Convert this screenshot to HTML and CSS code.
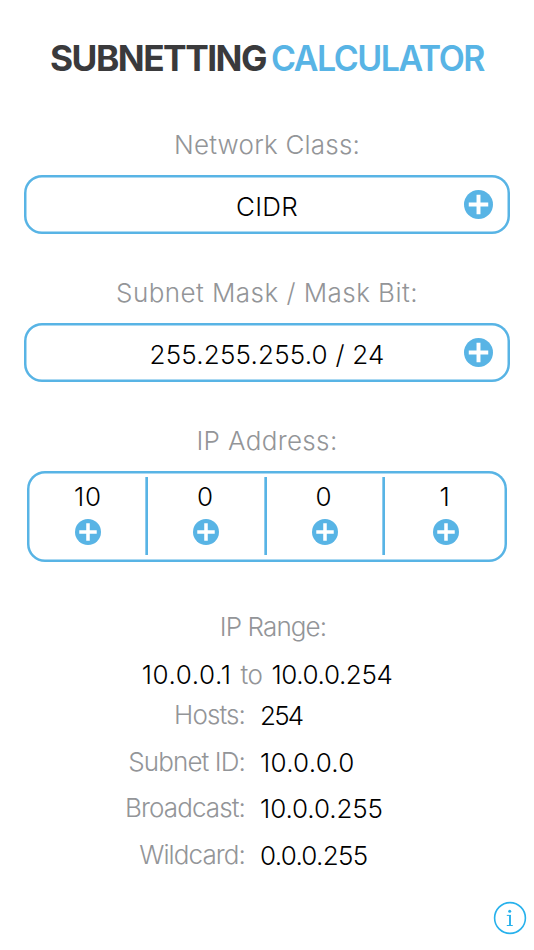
FILE: index.html
```html
<!DOCTYPE html>
<html lang="en">
<head>
<meta charset="utf-8">
<title>Subnetting Calculator</title>
<link rel="stylesheet" href="styles.css">
</head>
<body>
<svg class="defs" aria-hidden="true">
  <symbol id="plus" viewBox="0 0 28 28"><circle cx="14" cy="14" r="14" fill="#58b4e5"/><path d="M14 4.6v18.8M4.6 14h18.8" stroke="#fff" stroke-width="3.8"/></symbol>
</svg>
<main class="app">
  <svg class="logo" viewBox="0 0 534 50" role="img">
    <text class="logo-dark" x="50" y="41" textLength="216" lengthAdjust="spacingAndGlyphs">SUBNETTING</text>
    <text class="logo-blue" x="271" y="41" textLength="213" lengthAdjust="spacingAndGlyphs">CALCULATOR</text>
  </svg>
  <section class="group">
    <h2 class="label network">Network Class:</h2>
    <button class="field"><span class="value cidr">CIDR</span><svg class="plus"><use href="#plus"/></svg></button>
  </section>
  <section class="group">
    <h2 class="label mask">Subnet Mask / Mask Bit:</h2>
    <button class="field"><span class="value bits">255.255.255.0 / 24</span><svg class="plus"><use href="#plus"/></svg></button>
  </section>
  <section class="group">
    <h2 class="label address">IP Address:</h2>
    <div class="octets">
      <button class="octet first"><span class="two-digit">10</span><svg class="plus"><use href="#plus"/></svg></button>
      <i class="divider"></i>
      <button class="octet"><span class="digit">0</span><svg class="plus"><use href="#plus"/></svg></button>
      <i class="divider"></i>
      <button class="octet"><span class="digit">0</span><svg class="plus"><use href="#plus"/></svg></button>
      <i class="divider"></i>
      <button class="octet last"><span class="digit">1</span><svg class="plus"><use href="#plus"/></svg></button>
    </div>
  </section>
  <section class="results">
    <h2 class="range-label">IP Range:</h2>
    <p class="range"><span class="from">10.0.0.1</span><span class="to">to</span><span class="until">10.0.0.254</span></p>
    <dl class="list">
      <dt>Hosts:</dt><dd class="hosts">254</dd>
      <dt>Subnet ID:</dt><dd class="subnet">10.0.0.0</dd>
      <dt>Broadcast:</dt><dd>10.0.0.255</dd>
      <dt>Wildcard:</dt><dd class="wildcard">0.0.0.255</dd>
    </dl>
  </section>
  <footer class="footer">
    <svg class="info" viewBox="0 0 34 34"><circle cx="17" cy="17" r="15.4" fill="none" stroke="#27b1ec" stroke-width="1.6"/><circle cx="16.7" cy="10.2" r="1.5" fill="#27b1ec"/><path d="M13.8 14.4h4.2M13.8 24.5h6" fill="none" stroke="#27b1ec" stroke-width="1"/><path d="M17 14v10.5" stroke="#27b1ec" stroke-width="1.9"/></svg>
  </footer>
</main>
</body>
</html>
```

FILE: styles.css
```css
* { box-sizing: border-box; }
body { margin: 0; background: #fff; color: #000; font: 300 26px/30px Inter, "Liberation Sans", sans-serif; }
h2, p, dl, dd { margin: 0; font: inherit; }
button { border: 0; padding: 0; background: none; font: inherit; color: inherit; }
.defs { position: absolute; width: 0; height: 0; }
.app { width: 534px; height: 950px; padding-top: 30px; display: flex; flex-direction: column; overflow: hidden; }
.logo { display: block; width: 534px; height: 50px; margin-bottom: 50px; flex: none; }
.logo text { font-family: Inter, sans-serif; font-size: 35px; letter-spacing: -1.5px; }
.logo-dark { font-weight: 700; fill: #3a3a3c; }
.logo-blue { font-weight: 600; fill: #58b4e5; }
.group { height: 148px; flex: none; display: flex; flex-direction: column; align-items: center; gap: 15px; }
.label, .range-label, .list dt, .to { color: #939598; }
.network { letter-spacing: .2px; }
.mask { letter-spacing: .45px; }
.address { letter-spacing: .35px; }
.field { width: 486px; height: 59px; box-shadow: inset 0 0 0 2.5px #58b4e5; border-radius: 18px; display: grid; grid-template-columns: 1fr 29px 17px; align-items: center; }
.value { padding: 4px 0 0 46px; text-align: center; }
.field .plus { width: 29px; height: 29px; }
.cidr { letter-spacing: .3px; }
.bits { letter-spacing: .2px; }
.octets { width: 480px; height: 91px; flex: none; box-shadow: inset 0 0 0 2.5px #58b4e5; border-radius: 18px; display: grid; grid-template-columns: 118px 3px 116px 3px 115px 3px 1fr; padding: 6px 0 7px; }
.divider { background: linear-gradient(90deg, #8fccee 1px, #58b4e5 1px); }
.octet { height: 78px; padding-top: 5px; display: flex; flex-direction: column; align-items: center; gap: 7px; }
.octet.first { padding-left: 4px; }
.octet.last { padding-right: 1px; }
.two-digit { letter-spacing: .8px; }
.digit { padding-right: 2px; }
.octet .plus { width: 26px; height: 26px; }
.results { margin-top: 38px; text-align: center; }
.range-label { letter-spacing: -.9px; padding-left: 12px; }
.range { margin-top: 18px; display: flex; justify-content: center; gap: 9px; }
.from { letter-spacing: .6px; }
.to { letter-spacing: -.5px; }
.until { letter-spacing: -.4px; }
.list { display: grid; grid-template-columns: 245px 1fr; grid-auto-rows: 46.5px; column-gap: 15px; margin-top: 10px; }
.list dt { text-align: right; letter-spacing: -.9px; }
.list dd { text-align: left; padding-top: 1px; letter-spacing: -.1px; }
.list .hosts { letter-spacing: -1.8px; }
.list .subnet { letter-spacing: .25px; }
.list .wildcard { letter-spacing: -.7px; }
.footer { margin-top: auto; padding: 0 7px 15px 0; display: flex; justify-content: flex-end; }
.info { width: 34px; height: 34px; }
```
